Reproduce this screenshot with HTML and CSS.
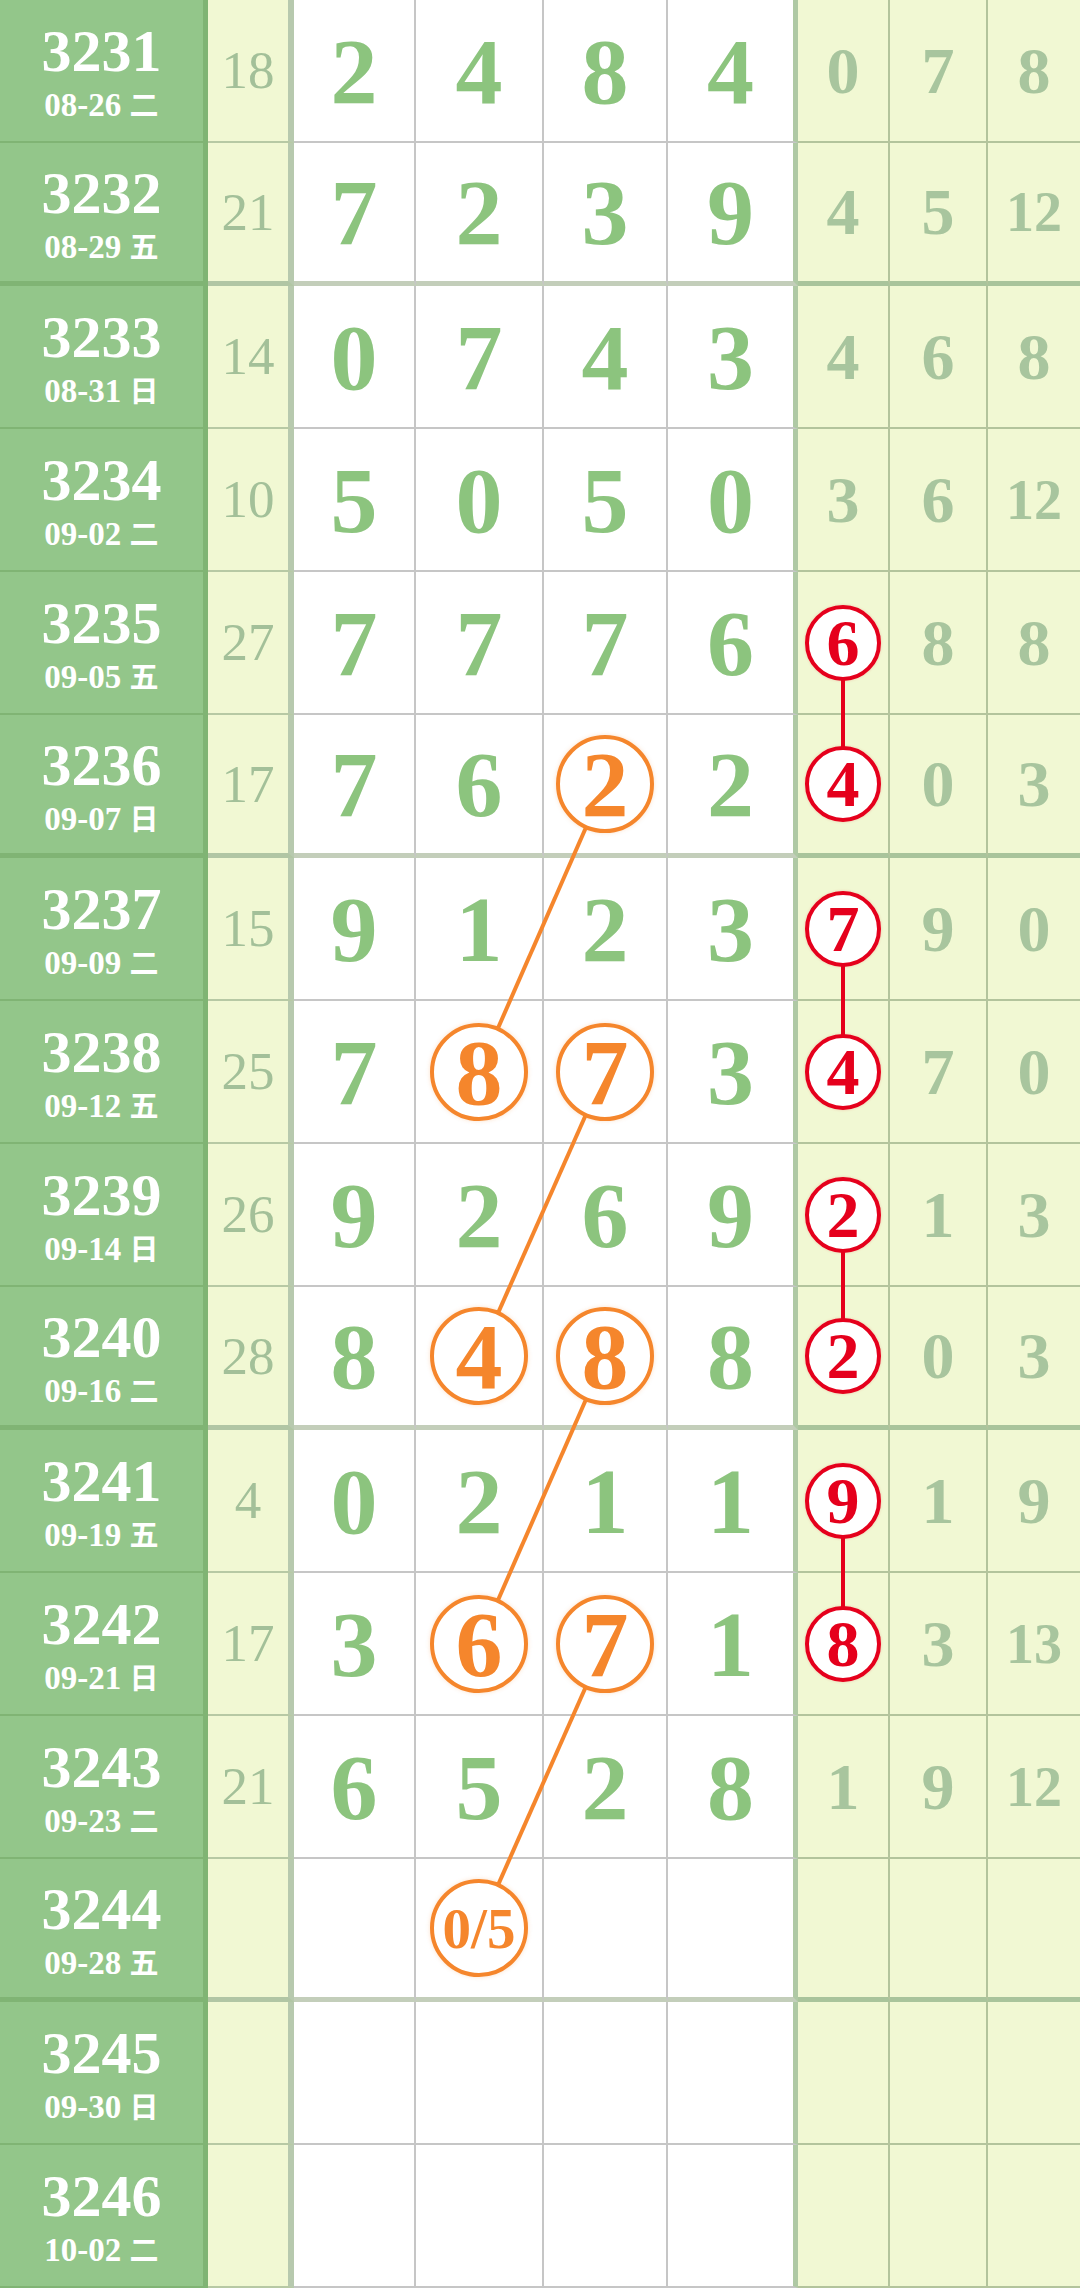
FILE: index.html
```
<!DOCTYPE html>
<html lang="zh-CN">
  <head>
    <meta charset="UTF-8" />
    <meta name="viewport" content="width=device-width, initial-scale=1.0" />
    <title>走势图</title>
    <link rel="stylesheet" href="styles.css">
  </head>
  <body>
    <div class="board">
      <div class="row">
        <div class="cell issue"><div class="no">3231</div><div class="date">08-26 <span class="wk">二</span></div></div>
        <div class="cell sum">18</div>
        <div class="cell dig">2</div><div class="cell dig">4</div><div class="cell dig">8</div><div class="cell dig last">4</div>
        <div class="cell miss">0</div><div class="cell miss">7</div><div class="cell miss">8</div>
      </div>
      <div class="row group-end">
        <div class="cell issue"><div class="no">3232</div><div class="date">08-29 <span class="wk">五</span></div></div>
        <div class="cell sum">21</div>
        <div class="cell dig">7</div><div class="cell dig">2</div><div class="cell dig">3</div><div class="cell dig last">9</div>
        <div class="cell miss">4</div><div class="cell miss">5</div><div class="cell miss small">12</div>
      </div>
      <div class="row">
        <div class="cell issue"><div class="no">3233</div><div class="date">08-31 <span class="wk">日</span></div></div>
        <div class="cell sum">14</div>
        <div class="cell dig">0</div><div class="cell dig">7</div><div class="cell dig">4</div><div class="cell dig last">3</div>
        <div class="cell miss">4</div><div class="cell miss">6</div><div class="cell miss">8</div>
      </div>
      <div class="row">
        <div class="cell issue"><div class="no">3234</div><div class="date">09-02 <span class="wk">二</span></div></div>
        <div class="cell sum">10</div>
        <div class="cell dig">5</div><div class="cell dig">0</div><div class="cell dig">5</div><div class="cell dig last">0</div>
        <div class="cell miss">3</div><div class="cell miss">6</div><div class="cell miss small">12</div>
      </div>
      <div class="row">
        <div class="cell issue"><div class="no">3235</div><div class="date">09-05 <span class="wk">五</span></div></div>
        <div class="cell sum">27</div>
        <div class="cell dig">7</div><div class="cell dig">7</div><div class="cell dig">7</div><div class="cell dig last">6</div>
        <div class="cell miss"><span class="hit">6</span></div><div class="cell miss">8</div><div class="cell miss">8</div>
      </div>
      <div class="row group-end">
        <div class="cell issue"><div class="no">3236</div><div class="date">09-07 <span class="wk">日</span></div></div>
        <div class="cell sum">17</div>
        <div class="cell dig">7</div><div class="cell dig">6</div><div class="cell dig"><span class="mark">2</span></div><div class="cell dig last">2</div>
        <div class="cell miss"><span class="hit">4</span></div><div class="cell miss">0</div><div class="cell miss">3</div>
      </div>
      <div class="row">
        <div class="cell issue"><div class="no">3237</div><div class="date">09-09 <span class="wk">二</span></div></div>
        <div class="cell sum">15</div>
        <div class="cell dig">9</div><div class="cell dig">1</div><div class="cell dig">2</div><div class="cell dig last">3</div>
        <div class="cell miss"><span class="hit">7</span></div><div class="cell miss">9</div><div class="cell miss">0</div>
      </div>
      <div class="row">
        <div class="cell issue"><div class="no">3238</div><div class="date">09-12 <span class="wk">五</span></div></div>
        <div class="cell sum">25</div>
        <div class="cell dig">7</div><div class="cell dig"><span class="mark">8</span></div><div class="cell dig"><span class="mark">7</span></div><div class="cell dig last">3</div>
        <div class="cell miss"><span class="hit">4</span></div><div class="cell miss">7</div><div class="cell miss">0</div>
      </div>
      <div class="row">
        <div class="cell issue"><div class="no">3239</div><div class="date">09-14 <span class="wk">日</span></div></div>
        <div class="cell sum">26</div>
        <div class="cell dig">9</div><div class="cell dig">2</div><div class="cell dig">6</div><div class="cell dig last">9</div>
        <div class="cell miss"><span class="hit">2</span></div><div class="cell miss">1</div><div class="cell miss">3</div>
      </div>
      <div class="row group-end">
        <div class="cell issue"><div class="no">3240</div><div class="date">09-16 <span class="wk">二</span></div></div>
        <div class="cell sum">28</div>
        <div class="cell dig">8</div><div class="cell dig"><span class="mark">4</span></div><div class="cell dig"><span class="mark">8</span></div><div class="cell dig last">8</div>
        <div class="cell miss"><span class="hit">2</span></div><div class="cell miss">0</div><div class="cell miss">3</div>
      </div>
      <div class="row">
        <div class="cell issue"><div class="no">3241</div><div class="date">09-19 <span class="wk">五</span></div></div>
        <div class="cell sum">4</div>
        <div class="cell dig">0</div><div class="cell dig">2</div><div class="cell dig">1</div><div class="cell dig last">1</div>
        <div class="cell miss"><span class="hit">9</span></div><div class="cell miss">1</div><div class="cell miss">9</div>
      </div>
      <div class="row">
        <div class="cell issue"><div class="no">3242</div><div class="date">09-21 <span class="wk">日</span></div></div>
        <div class="cell sum">17</div>
        <div class="cell dig">3</div><div class="cell dig"><span class="mark">6</span></div><div class="cell dig"><span class="mark">7</span></div><div class="cell dig last">1</div>
        <div class="cell miss"><span class="hit">8</span></div><div class="cell miss">3</div><div class="cell miss small">13</div>
      </div>
      <div class="row">
        <div class="cell issue"><div class="no">3243</div><div class="date">09-23 <span class="wk">二</span></div></div>
        <div class="cell sum">21</div>
        <div class="cell dig">6</div><div class="cell dig">5</div><div class="cell dig">2</div><div class="cell dig last">8</div>
        <div class="cell miss">1</div><div class="cell miss">9</div><div class="cell miss small">12</div>
      </div>
      <div class="row group-end">
        <div class="cell issue"><div class="no">3244</div><div class="date">09-28 <span class="wk">五</span></div></div>
        <div class="cell sum"></div>
        <div class="cell dig"></div><div class="cell dig"><span class="mark guess">0/5</span></div><div class="cell dig"></div><div class="cell dig last"></div>
        <div class="cell miss"></div><div class="cell miss"></div><div class="cell miss"></div>
      </div>
      <div class="row">
        <div class="cell issue"><div class="no">3245</div><div class="date">09-30 <span class="wk">日</span></div></div>
        <div class="cell sum"></div>
        <div class="cell dig"></div><div class="cell dig"></div><div class="cell dig"></div><div class="cell dig last"></div>
        <div class="cell miss"></div><div class="cell miss"></div><div class="cell miss"></div>
      </div>
      <div class="row">
        <div class="cell issue"><div class="no">3246</div><div class="date">10-02 <span class="wk">二</span></div></div>
        <div class="cell sum"></div>
        <div class="cell dig"></div><div class="cell dig"></div><div class="cell dig"></div><div class="cell dig last"></div>
        <div class="cell miss"></div><div class="cell miss"></div><div class="cell miss"></div>
      </div>

      <!-- connector lines, drawn under the circles -->
      <svg class="links" width="1080" height="2288" viewBox="0 0 1080 2288">
        <g stroke="#f5862c" stroke-width="4">
          <line x1="605" y1="784" x2="479" y2="1071.5" />
          <line x1="605" y1="1071.5" x2="479" y2="1356" />
          <line x1="605" y1="1356" x2="479" y2="1643.5" />
          <line x1="605" y1="1643.5" x2="479" y2="1928" />
        </g>
        <g stroke="#e5001c" stroke-width="4">
          <line x1="843" y1="642.5" x2="843" y2="784" />
          <line x1="843" y1="928.5" x2="843" y2="1071.5" />
          <line x1="843" y1="1214.5" x2="843" y2="1356" />
          <line x1="843" y1="1500.5" x2="843" y2="1643.5" />
        </g>
      </svg>
    </div>
  </body>
</html>
```

FILE: styles.css
```
/* Reset */
* {
  margin: 0;
  padding: 0;
  box-sizing: border-box;
}

body {
  width: 1080px;
  overflow: hidden;
  background: #ffffff;
  font-family: "Liberation Serif", "Noto Sans CJK SC", serif;
}

/* Chart table */
.board {
  position: relative;
  width: 1080px;
}

.row {
  display: grid;
  grid-template-columns: 208px 86px 122px 128px 124px 130px 92px 98px 92px;
  height: 143px;
}

.cell {
  display: flex;
  align-items: center;
  justify-content: center;
  border-bottom: 2px solid #c6c6c6;
  line-height: 1;
}

.row.group-end .cell {
  border-bottom-width: 5px;
}

/* Issue column */
.issue {
  flex-direction: column;
  gap: 8px;
  background: #93c68a;
  color: #ffffff;
  font-weight: bold;
  border-right: 5px solid #80b474;
  border-bottom-color: #80b474;
  padding-top: 2px;
}

.issue .no {
  font-size: 60px;
}

.issue .date {
  font-size: 33px;
}

.issue .wk {
  font-family: "Noto Sans CJK SC", sans-serif;
  font-size: 29px;
  font-weight: bold;
}

/* Sum column */
.sum {
  background: #f1f8d3;
  color: #a3c099;
  font-size: 53px;
  border-right: 6px solid #b7c9ae;
  border-bottom-color: #b7c9a4;
}

.row.group-end .sum {
  border-bottom-color: #b1c6a4;
}

/* Digit columns */
.dig {
  background: #ffffff;
  color: #8cc47e;
  font-size: 94px;
  font-weight: bold;
  border-right: 2px solid #c6c6c6;
}

.row.group-end .dig {
  border-bottom-color: #c3ceba;
}

.dig.last {
  border-right: 5px solid #afc9a4;
}

/* Miss columns */
.miss {
  background: #f1f8d3;
  color: #a8c59e;
  font-size: 66px;
  font-weight: bold;
  border-right: 2px solid #b3c49c;
  border-bottom-color: #b3c49c;
}

.row.group-end .miss {
  border-bottom-color: #a9c49b;
}

.miss.small {
  font-size: 56px;
}

.miss:last-child {
  border-right: none;
}

/* Circled numbers */
.mark,
.hit {
  position: relative;
  z-index: 2;
  display: flex;
  align-items: center;
  justify-content: center;
  border-radius: 50%;
  background: #ffffff;
}

.mark {
  width: 98px;
  height: 98px;
  border: 4px solid #f5862c;
  color: #f5862c;
  font-size: 94px;
  box-shadow: 0 0 4px rgba(245, 134, 44, 0.25);
}

.mark.guess {
  font-size: 57px;
}

.hit {
  width: 76px;
  height: 76px;
  border: 4px solid #e5001c;
  color: #e5001c;
  font-size: 66px;
  box-shadow: 0 0 3px rgba(229, 0, 28, 0.2);
}

.links {
  position: absolute;
  top: 0;
  left: 0;
  z-index: 1;
  pointer-events: none;
}
```
